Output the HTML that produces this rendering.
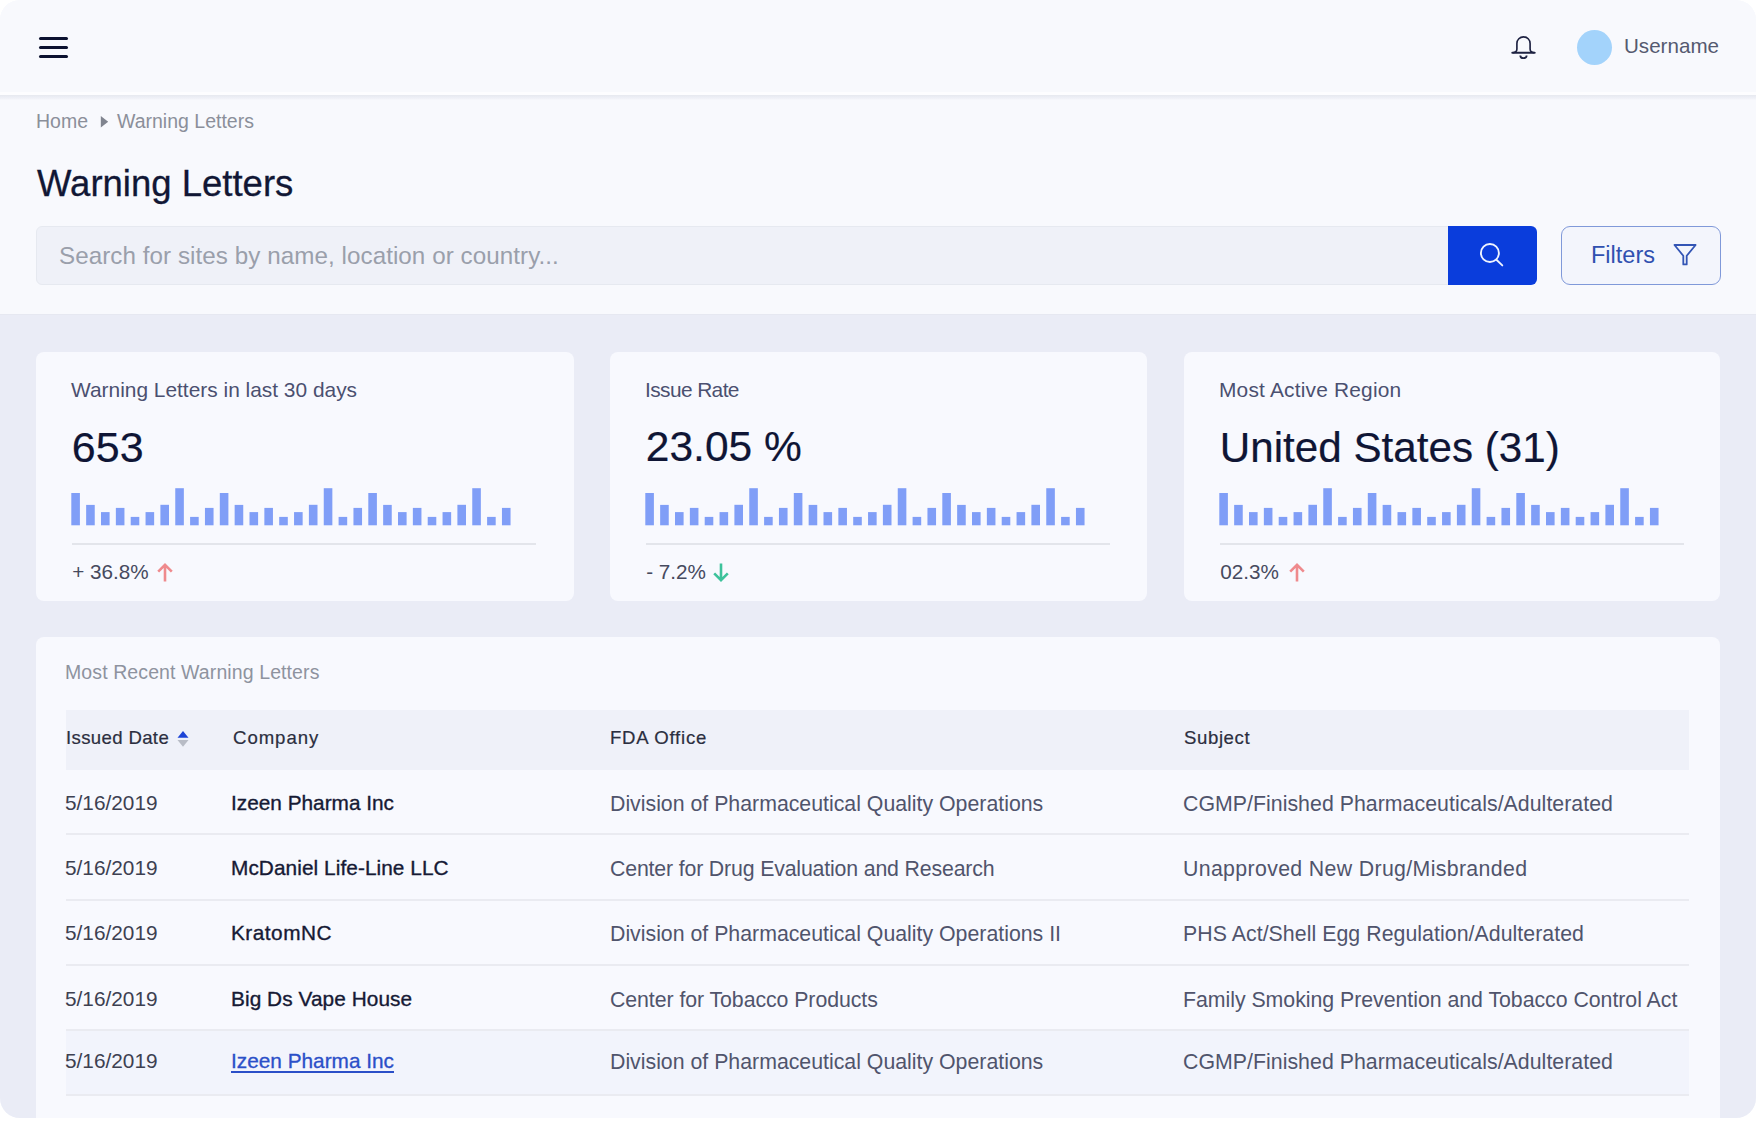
<!DOCTYPE html>
<html><head><meta charset="utf-8">
<style>
*{margin:0;padding:0;box-sizing:border-box}
html,body{width:1758px;height:1122px;background:#fff;overflow:hidden}
body{font-family:"Liberation Sans",sans-serif;position:relative}
#frame{position:absolute;left:0;top:0;width:1756px;height:1118px;border-radius:20px;overflow:hidden;background:#f8f9fd}
.a{position:absolute;white-space:nowrap}
.header{position:absolute;left:0;top:0;width:1756px;height:92px;background:#f8f9fd}
.hline{position:absolute;left:0;top:92px;width:1756px;height:3px;background:#fdfdff}
.hshadow{position:absolute;left:0;top:95px;width:1756px;height:5px;background:linear-gradient(#e7e9ef,#eceef5 40%,#f1f2f8 75%,#f8f9fd)}
.band{position:absolute;left:0;top:314px;width:1756px;height:805px;background:#eaecf6;border-top:1px solid #e6e8f1}
.card{position:absolute;background:#f8f9fe;border-radius:8px}
.label{font-size:20.9px;line-height:20.9px;color:#4b5070}
.val{font-size:43px;line-height:43px;color:#0f1535;-webkit-text-stroke:0.2px #0f1535}
.pct{font-size:20.7px;line-height:20.7px;color:#464a5e}
.sep{position:absolute;height:2px;background:#e3e5eb}
.th{font-size:18.6px;line-height:18.6px;color:#2b2e40;-webkit-text-stroke:0.2px #2b2e40}
.rd{font-size:20.8px;line-height:20.8px;color:#3d4051}
.rc{font-size:20.8px;line-height:20.8px;color:#161a35;-webkit-text-stroke:0.35px #161a35}
.ro{font-size:21.3px;line-height:21.3px;color:#50546c}
.rsep{position:absolute;left:66px;width:1623px;height:2px;background:#eaebf1}
</style></head><body>
<div id="frame">
  <div class="header"></div><div class="hline"></div><div class="hshadow"></div>
  <div class="a" style="left:39px;top:37px;width:29px;height:3px;border-radius:2px;background:#0c1230"></div>
  <div class="a" style="left:39px;top:46px;width:29px;height:3px;border-radius:2px;background:#0c1230"></div>
  <div class="a" style="left:39px;top:55px;width:29px;height:3px;border-radius:2px;background:#0c1230"></div>
  <svg class="a" style="left:1508px;top:32px" width="32" height="30" viewBox="0 0 32 30">
    <path d="M5 20.7 Q8.9 20.4 8.9 17 V11.4 A6.6 6.6 0 0 1 22.1 11.4 V17 Q22.1 20.4 26 20.7" fill="none" stroke="#1e2242" stroke-width="1.65"/>
    <path d="M4.3 20.7 H26.7" stroke="#1e2242" stroke-width="2" stroke-linecap="round"/>
    <path d="M12.3 23.4 A3.15 2.7 0 0 0 18.6 23.4" fill="none" stroke="#1e2242" stroke-width="1.8"/>
  </svg>
  <div class="a" style="left:1576.7px;top:29.6px;width:35.4px;height:35.4px;border-radius:50%;background:#a3d3fb"></div>
  <div class="a" style="left:1624px;top:36px;font-size:20.6px;line-height:20.6px;color:#555a70">Username</div>

  <div class="a" style="left:36px;top:111.8px;font-size:19.5px;line-height:19.5px;color:#8b8f9a">Home</div>
  <svg class="a" style="left:100px;top:115.2px" width="10" height="14" viewBox="0 0 10 14"><path d="M0.8 1 L8.2 6.8 L0.8 12.6 Z" fill="#80848f"/></svg>
  <div class="a" style="left:117px;top:111.8px;font-size:19.5px;line-height:19.5px;color:#8b8f9a">Warning Letters</div>
  <div class="a" style="left:37px;top:165.8px;font-size:36.5px;line-height:36.5px;color:#111735;-webkit-text-stroke:0.3px #111735">Warning Letters</div>

  <div class="a" style="left:36px;top:226px;width:1420px;height:59px;background:#eff1f8;border:1px solid #e6e9f0;border-radius:6px"></div>
  <div class="a" style="left:59px;top:243.9px;font-size:24.2px;line-height:24.2px;letter-spacing:0.06px;color:#9a9fab">Search for sites by name, location or country...</div>
  <div class="a" style="left:1448px;top:226px;width:89px;height:59px;background:#0a3ddc;border-radius:0 6px 6px 0"></div>
  <svg class="a" style="left:1474px;top:238px" width="36" height="36" viewBox="0 0 36 36">
    <circle cx="15.9" cy="15" r="9" fill="none" stroke="#eef3ff" stroke-width="1.9"/>
    <path d="M22.4 21.8 L28.3 27.4" stroke="#eef3ff" stroke-width="1.9" stroke-linecap="round"/>
  </svg>
  <div class="a" style="left:1561px;top:226px;width:160px;height:59px;background:#f3f5fc;border:1.5px solid #8099d9;border-radius:9px"></div>
  <div class="a" style="left:1591px;top:243.6px;font-size:23.5px;line-height:23.5px;color:#3050b0">Filters</div>
  <svg class="a" style="left:1670px;top:240px" width="30" height="28" viewBox="0 0 30 28">
    <path d="M4.5 5 H25.6 L16.7 15.8 V24.4 H13.3 V15.8 Z" fill="none" stroke="#3355b5" stroke-width="1.8" stroke-linejoin="round"/>
  </svg>

  <div class="band"></div>

  <div class="card" style="left:36px;top:352px;width:538px;height:249px"></div>
  <div class="card" style="left:610px;top:352px;width:537px;height:249px"></div>
  <div class="card" style="left:1184px;top:352px;width:536px;height:249px"></div>
  <div class="a label" style="left:71px;top:380.2px;letter-spacing:0px">Warning Letters in last 30 days</div>
  <div class="a val" style="left:71.8px;top:425.8px;font-size:43px;line-height:43px">653</div>
  <div class="a" style="left:71px;top:488px;width:460px;height:40px"><svg width="460" height="40" viewBox="0 0 460 40" style="position:absolute;left:0;top:0"><rect x="0.30" y="5.00" width="8.6" height="32.3" fill="#809ef7"/><rect x="15.15" y="16.90" width="8.6" height="20.4" fill="#809ef7"/><rect x="30.00" y="24.10" width="8.6" height="13.2" fill="#809ef7"/><rect x="44.85" y="19.90" width="8.6" height="17.4" fill="#809ef7"/><rect x="59.70" y="28.90" width="8.6" height="8.4" fill="#809ef7"/><rect x="74.55" y="24.10" width="8.6" height="13.2" fill="#809ef7"/><rect x="89.40" y="16.80" width="8.6" height="20.5" fill="#809ef7"/><rect x="104.25" y="0.20" width="8.6" height="37.1" fill="#809ef7"/><rect x="119.10" y="28.90" width="8.6" height="8.4" fill="#809ef7"/><rect x="133.95" y="19.90" width="8.6" height="17.4" fill="#809ef7"/><rect x="148.80" y="5.00" width="8.6" height="32.3" fill="#809ef7"/><rect x="163.65" y="16.90" width="8.6" height="20.4" fill="#809ef7"/><rect x="178.50" y="24.10" width="8.6" height="13.2" fill="#809ef7"/><rect x="193.35" y="19.90" width="8.6" height="17.4" fill="#809ef7"/><rect x="208.20" y="28.90" width="8.6" height="8.4" fill="#809ef7"/><rect x="223.05" y="24.10" width="8.6" height="13.2" fill="#809ef7"/><rect x="237.90" y="16.80" width="8.6" height="20.5" fill="#809ef7"/><rect x="252.75" y="0.20" width="8.6" height="37.1" fill="#809ef7"/><rect x="267.60" y="28.90" width="8.6" height="8.4" fill="#809ef7"/><rect x="282.45" y="19.90" width="8.6" height="17.4" fill="#809ef7"/><rect x="297.30" y="5.00" width="8.6" height="32.3" fill="#809ef7"/><rect x="312.15" y="16.90" width="8.6" height="20.4" fill="#809ef7"/><rect x="327.00" y="24.10" width="8.6" height="13.2" fill="#809ef7"/><rect x="341.85" y="19.90" width="8.6" height="17.4" fill="#809ef7"/><rect x="356.70" y="28.90" width="8.6" height="8.4" fill="#809ef7"/><rect x="371.55" y="24.10" width="8.6" height="13.2" fill="#809ef7"/><rect x="386.40" y="16.80" width="8.6" height="20.5" fill="#809ef7"/><rect x="401.25" y="0.20" width="8.6" height="37.1" fill="#809ef7"/><rect x="416.10" y="28.90" width="8.6" height="8.4" fill="#809ef7"/><rect x="430.95" y="19.90" width="8.6" height="17.4" fill="#809ef7"/></svg></div>
  <div class="sep" style="left:72px;top:543px;width:464px"></div>
  <div class="a pct" style="left:72.2px;top:561.5px">+ 36.8%</div>
  <svg class="a" style="left:154.5px;top:561.5px" width="20" height="21" viewBox="0 0 20 21"><path d="M10 19.5 V3.2 M3.2 9.6 L10 2.8 L16.8 9.6" fill="none" stroke="#ef8a8d" stroke-width="2.6"/></svg>
  <div class="a label" style="left:645px;top:380.2px;letter-spacing:-0.6px">Issue Rate</div>
  <div class="a val" style="left:645.8px;top:426.2px;font-size:42.5px;line-height:42.5px">23.05 %</div>
  <div class="a" style="left:645px;top:488px;width:460px;height:40px"><svg width="460" height="40" viewBox="0 0 460 40" style="position:absolute;left:0;top:0"><rect x="0.30" y="5.00" width="8.6" height="32.3" fill="#809ef7"/><rect x="15.15" y="16.90" width="8.6" height="20.4" fill="#809ef7"/><rect x="30.00" y="24.10" width="8.6" height="13.2" fill="#809ef7"/><rect x="44.85" y="19.90" width="8.6" height="17.4" fill="#809ef7"/><rect x="59.70" y="28.90" width="8.6" height="8.4" fill="#809ef7"/><rect x="74.55" y="24.10" width="8.6" height="13.2" fill="#809ef7"/><rect x="89.40" y="16.80" width="8.6" height="20.5" fill="#809ef7"/><rect x="104.25" y="0.20" width="8.6" height="37.1" fill="#809ef7"/><rect x="119.10" y="28.90" width="8.6" height="8.4" fill="#809ef7"/><rect x="133.95" y="19.90" width="8.6" height="17.4" fill="#809ef7"/><rect x="148.80" y="5.00" width="8.6" height="32.3" fill="#809ef7"/><rect x="163.65" y="16.90" width="8.6" height="20.4" fill="#809ef7"/><rect x="178.50" y="24.10" width="8.6" height="13.2" fill="#809ef7"/><rect x="193.35" y="19.90" width="8.6" height="17.4" fill="#809ef7"/><rect x="208.20" y="28.90" width="8.6" height="8.4" fill="#809ef7"/><rect x="223.05" y="24.10" width="8.6" height="13.2" fill="#809ef7"/><rect x="237.90" y="16.80" width="8.6" height="20.5" fill="#809ef7"/><rect x="252.75" y="0.20" width="8.6" height="37.1" fill="#809ef7"/><rect x="267.60" y="28.90" width="8.6" height="8.4" fill="#809ef7"/><rect x="282.45" y="19.90" width="8.6" height="17.4" fill="#809ef7"/><rect x="297.30" y="5.00" width="8.6" height="32.3" fill="#809ef7"/><rect x="312.15" y="16.90" width="8.6" height="20.4" fill="#809ef7"/><rect x="327.00" y="24.10" width="8.6" height="13.2" fill="#809ef7"/><rect x="341.85" y="19.90" width="8.6" height="17.4" fill="#809ef7"/><rect x="356.70" y="28.90" width="8.6" height="8.4" fill="#809ef7"/><rect x="371.55" y="24.10" width="8.6" height="13.2" fill="#809ef7"/><rect x="386.40" y="16.80" width="8.6" height="20.5" fill="#809ef7"/><rect x="401.25" y="0.20" width="8.6" height="37.1" fill="#809ef7"/><rect x="416.10" y="28.90" width="8.6" height="8.4" fill="#809ef7"/><rect x="430.95" y="19.90" width="8.6" height="17.4" fill="#809ef7"/></svg></div>
  <div class="sep" style="left:646px;top:543px;width:464px"></div>
  <div class="a pct" style="left:646.2px;top:561.5px">- 7.2%</div>
  <svg class="a" style="left:710.5px;top:561.5px" width="20" height="21" viewBox="0 0 20 21"><path d="M10 1.5 V17.8 M3.2 11.4 L10 18.2 L16.8 11.4" fill="none" stroke="#3dc29b" stroke-width="2.6"/></svg>
  <div class="a label" style="left:1219px;top:380.2px;letter-spacing:0.2px">Most Active Region</div>
  <div class="a val" style="left:1219.8px;top:426.5px;font-size:42.2px;line-height:42.2px">United States (31)</div>
  <div class="a" style="left:1219px;top:488px;width:460px;height:40px"><svg width="460" height="40" viewBox="0 0 460 40" style="position:absolute;left:0;top:0"><rect x="0.30" y="5.00" width="8.6" height="32.3" fill="#809ef7"/><rect x="15.15" y="16.90" width="8.6" height="20.4" fill="#809ef7"/><rect x="30.00" y="24.10" width="8.6" height="13.2" fill="#809ef7"/><rect x="44.85" y="19.90" width="8.6" height="17.4" fill="#809ef7"/><rect x="59.70" y="28.90" width="8.6" height="8.4" fill="#809ef7"/><rect x="74.55" y="24.10" width="8.6" height="13.2" fill="#809ef7"/><rect x="89.40" y="16.80" width="8.6" height="20.5" fill="#809ef7"/><rect x="104.25" y="0.20" width="8.6" height="37.1" fill="#809ef7"/><rect x="119.10" y="28.90" width="8.6" height="8.4" fill="#809ef7"/><rect x="133.95" y="19.90" width="8.6" height="17.4" fill="#809ef7"/><rect x="148.80" y="5.00" width="8.6" height="32.3" fill="#809ef7"/><rect x="163.65" y="16.90" width="8.6" height="20.4" fill="#809ef7"/><rect x="178.50" y="24.10" width="8.6" height="13.2" fill="#809ef7"/><rect x="193.35" y="19.90" width="8.6" height="17.4" fill="#809ef7"/><rect x="208.20" y="28.90" width="8.6" height="8.4" fill="#809ef7"/><rect x="223.05" y="24.10" width="8.6" height="13.2" fill="#809ef7"/><rect x="237.90" y="16.80" width="8.6" height="20.5" fill="#809ef7"/><rect x="252.75" y="0.20" width="8.6" height="37.1" fill="#809ef7"/><rect x="267.60" y="28.90" width="8.6" height="8.4" fill="#809ef7"/><rect x="282.45" y="19.90" width="8.6" height="17.4" fill="#809ef7"/><rect x="297.30" y="5.00" width="8.6" height="32.3" fill="#809ef7"/><rect x="312.15" y="16.90" width="8.6" height="20.4" fill="#809ef7"/><rect x="327.00" y="24.10" width="8.6" height="13.2" fill="#809ef7"/><rect x="341.85" y="19.90" width="8.6" height="17.4" fill="#809ef7"/><rect x="356.70" y="28.90" width="8.6" height="8.4" fill="#809ef7"/><rect x="371.55" y="24.10" width="8.6" height="13.2" fill="#809ef7"/><rect x="386.40" y="16.80" width="8.6" height="20.5" fill="#809ef7"/><rect x="401.25" y="0.20" width="8.6" height="37.1" fill="#809ef7"/><rect x="416.10" y="28.90" width="8.6" height="8.4" fill="#809ef7"/><rect x="430.95" y="19.90" width="8.6" height="17.4" fill="#809ef7"/></svg></div>
  <div class="sep" style="left:1220px;top:543px;width:464px"></div>
  <div class="a pct" style="left:1220.2px;top:561.5px">02.3%</div>
  <svg class="a" style="left:1286.5px;top:561.5px" width="20" height="21" viewBox="0 0 20 21"><path d="M10 19.5 V3.2 M3.2 9.6 L10 2.8 L16.8 9.6" fill="none" stroke="#ef8a8d" stroke-width="2.6"/></svg>
  <div class="card" style="left:36px;top:637px;width:1684px;height:600px"></div>
  <div class="a" style="left:65px;top:663.2px;font-size:19.5px;line-height:19.5px;letter-spacing:0.1px;color:#8e939f">Most Recent Warning Letters</div>
  <div class="a" style="left:66px;top:710px;width:1623px;height:60px;background:#eff1f9"></div>
  <div class="a th" style="left:66px;top:729.1px;letter-spacing:0.35px">Issued Date</div>
  <svg class="a" style="left:176px;top:729px" width="14" height="20" viewBox="0 0 14 20"><path d="M7 2 L12.5 8.8 H1.5 Z" fill="#1d44d6"/><path d="M7 17.8 L12.5 11 H1.5 Z" fill="#b8bcc6"/></svg>
  <div class="a th" style="left:233px;top:729.1px;letter-spacing:0.95px">Company</div>
  <div class="a th" style="left:610px;top:729.1px;letter-spacing:0.75px">FDA Office</div>
  <div class="a th" style="left:1184px;top:729.1px;letter-spacing:0.6px">Subject</div>
  <div class="a" style="left:66px;top:1030.5px;width:1623px;height:63.5px;background:#f2f4fc"></div>
  <div class="a rd" style="left:65px;top:792.6px">5/16/2019</div>
  <div class="a rc" style="left:231px;top:792.6px;letter-spacing:0px;">Izeen Pharma Inc</div>
  <div class="a ro" style="left:610px;top:793.7px;letter-spacing:0px">Division of Pharmaceutical Quality Operations</div>
  <div class="a ro" style="left:1183px;top:793.7px;letter-spacing:0.035px">CGMP/Finished Pharmaceuticals/Adulterated</div>
  <div class="rsep" style="top:833.3px"></div>
  <div class="a rd" style="left:65px;top:858.1px">5/16/2019</div>
  <div class="a rc" style="left:231px;top:858.1px;letter-spacing:0.07px;">McDaniel Life-Line LLC</div>
  <div class="a ro" style="left:610px;top:859.2px;letter-spacing:-0.16px">Center for Drug Evaluation and Research</div>
  <div class="a ro" style="left:1183px;top:859.2px;letter-spacing:0.35px">Unapproved New Drug/Misbranded</div>
  <div class="rsep" style="top:899.2px"></div>
  <div class="a rd" style="left:65px;top:923.0px">5/16/2019</div>
  <div class="a rc" style="left:231px;top:923.0px;letter-spacing:0.49px;">KratomNC</div>
  <div class="a ro" style="left:610px;top:924.1px;letter-spacing:0px">Division of Pharmaceutical Quality Operations II</div>
  <div class="a ro" style="left:1183px;top:924.1px;letter-spacing:0.05px">PHS Act/Shell Egg Regulation/Adulterated</div>
  <div class="rsep" style="top:964.2px"></div>
  <div class="a rd" style="left:65px;top:988.6px">5/16/2019</div>
  <div class="a rc" style="left:231px;top:988.6px;letter-spacing:0.07px;">Big Ds Vape House</div>
  <div class="a ro" style="left:610px;top:989.7px;letter-spacing:-0.065px">Center for Tobacco Products</div>
  <div class="a ro" style="left:1183px;top:989.7px;letter-spacing:-0.027px">Family Smoking Prevention and Tobacco Control Act</div>
  <div class="rsep" style="top:1029.4px"></div>
  <div class="a rd" style="left:65px;top:1050.7px">5/16/2019</div>
  <div class="a rc" style="left:231px;top:1050.7px;letter-spacing:0px;color:#2b4fc8;-webkit-text-stroke:0.3px #2b4fc8;text-decoration:underline;text-underline-offset:3px;text-decoration-thickness:1.7px">Izeen Pharma Inc</div>
  <div class="a ro" style="left:610px;top:1051.8px;letter-spacing:0px">Division of Pharmaceutical Quality Operations</div>
  <div class="a ro" style="left:1183px;top:1051.8px;letter-spacing:0.035px">CGMP/Finished Pharmaceuticals/Adulterated</div>
  <div class="rsep" style="top:1094.3px"></div>
</div>
</body></html>
